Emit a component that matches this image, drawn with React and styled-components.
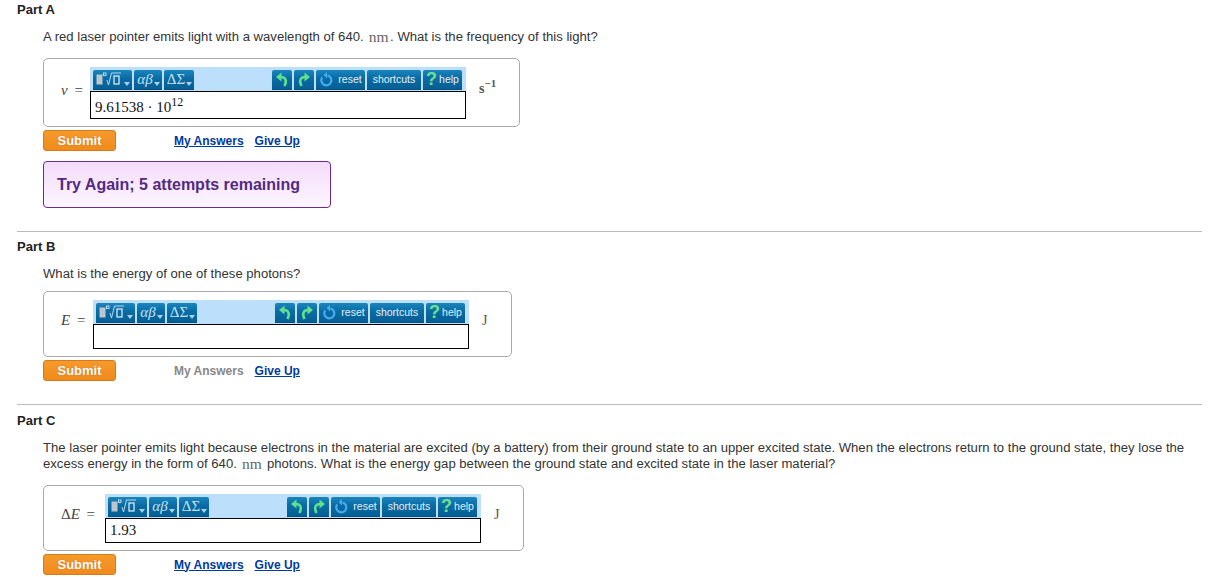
import React from 'react';
import styled, { createGlobalStyle } from 'styled-components';

const GlobalStyle = createGlobalStyle`
  html, body {
    margin: 0;
    padding: 0;
    background: #fff;
    overflow: hidden;
  }
  body {
    font-family: "Liberation Sans", Arial, sans-serif;
    font-size: 13px;
    color: #333;
  }
`;

const Page = styled.div`
  width: 1208px;
  height: 577px;
  padding: 0 6px 0 17px;
  box-sizing: border-box;
`;

const Part = styled.section`
  padding-top: ${(p) => p.$top}px;
  padding-bottom: ${(p) => p.$bottom}px;
  border-bottom: ${(p) => (p.$last ? 'none' : '1px solid #bbb')};
`;

const PartTitle = styled.h3`
  margin: 0;
  font-size: 13px;
  line-height: 18px;
  font-weight: bold;
  color: #222;
`;

const Body = styled.div`
  padding-left: 26px;
`;

const Question = styled.p`
  margin: ${(p) => p.$top}px 0 ${(p) => p.$bottom}px;
  width: 1150px;
  font-size: 13.12px;
  line-height: 16px;
  color: #333;
`;

const Mathy = styled.span`
  margin: 0 1.5px;
  font-family: "Liberation Serif", serif;
  font-size: 15.5px;
  line-height: 0;
  vertical-align: -1px;
  color: #666;
`;

const AnswerBox = styled.div`
  display: flex;
  align-items: center;
  box-sizing: border-box;
  width: ${(p) => p.$width}px;
  padding: 8px 0 7px 17px;
  border: 1px solid #aaa;
  border-radius: 5px;
`;

const Label = styled.div`
  width: ${(p) => p.$width}px;
  flex: none;
  padding-bottom: ${(p) => p.$lift}px;
  font-family: "Liberation Serif", serif;
  font-size: 15px;
  word-spacing: 3px;
  color: #444;
  white-space: nowrap;
  i { font-style: italic; }
`;

const Editor = styled.div`
  width: 376px;
  flex: none;
`;

const Toolbar = styled.div`
  display: flex;
  height: 24px;
  box-sizing: border-box;
  padding: 3px 4px 1px 3px;
  gap: 2px;
  background: #bcdffb;
`;

const Spacer = styled.div`
  flex: 1;
`;

const ToolButton = styled.div`
  display: flex;
  align-items: center;
  justify-content: center;
  position: relative;
  box-sizing: border-box;
  width: ${(p) => p.$width}px;
  height: 20px;
  padding-bottom: 1px;
  border-radius: 2px 2px 0 0;
  background: linear-gradient(#1a85bd, #0a6ba3 45%, #055f94);
  border-bottom: 1px solid #045283;
  color: #e2f1fb;
  font-size: 10.5px;
  white-space: nowrap;
`;

const MenuText = styled.span`
  font-family: "Liberation Serif", serif;
  font-size: 15px;
  color: #c5e2f5;
  font-style: ${(p) => (p.$italic ? 'italic' : 'normal')};
  margin-right: 6px;
`;

const IconSlot = styled.span`
  display: flex;
  margin-right: ${(p) => p.$right || 0}px;
`;

const ButtonLabel = styled.span`
  margin-left: 4px;
`;

const Caret = styled.span`
  position: absolute;
  right: 2px;
  bottom: 3px;
  width: 0;
  height: 0;
  border-left: 3px solid transparent;
  border-right: 3px solid transparent;
  border-top: 4px solid #a9d3ef;
`;

const QuestionMark = styled.span`
  font-size: 18px;
  font-weight: bold;
  line-height: 18px;
  color: #6fe08c;
  margin-right: 2px;
`;

const Input = styled.div`
  height: ${(p) => p.$height}px;
  box-sizing: border-box;
  border: 1px solid #000;
  padding-left: 4px;
  font-family: "Liberation Serif", serif;
  font-size: 15px;
  line-height: ${(p) => (p.$height > 25 ? p.$height + 2 : p.$height - 2)}px;
  color: #111;
  sup {
    font-size: 12px;
    line-height: 0;
    vertical-align: 6px;
  }
`;

const Unit = styled.div`
  margin-left: 13px;
  padding-bottom: ${(p) => (p.$bold ? 9 : 7)}px;
  font-family: "Liberation Serif", serif;
  font-size: 14px;
  font-weight: ${(p) => (p.$bold ? 'bold' : 'normal')};
  color: #555;
  sup {
    font-size: 11px;
    line-height: 0;
    vertical-align: 6px;
  }
`;

const Actions = styled.div`
  display: flex;
  align-items: center;
  margin-top: 3px;
`;

const Submit = styled.button`
  width: 73px;
  height: 21px;
  padding: 0;
  box-sizing: border-box;
  border: 1px solid #d67a1a;
  border-radius: 3px;
  background: linear-gradient(#f59a2c, #f08a1c);
  color: #fff;
  font: bold 13px "Liberation Sans", sans-serif;
  text-shadow: 0 0 1px rgba(120, 60, 0, 0.5);
`;

const ActionLinks = styled.div`
  display: flex;
  gap: 11px;
  margin-left: 58px;
`;

const ActionLink = styled.a`
  font-size: 12px;
  font-weight: bold;
  color: ${(p) => (p.$disabled ? '#888' : '#003b9c')};
  text-decoration: ${(p) => (p.$disabled ? 'none' : 'underline')};
`;

const Feedback = styled.div`
  width: 288px;
  height: 47px;
  margin-top: 10px;
  padding-left: 13px;
  box-sizing: border-box;
  display: flex;
  align-items: center;
  border: 1px solid #6c2a8e;
  border-radius: 4px;
  background: linear-gradient(#f4dcfc, #fdf6ff);
  color: #542a82;
  font-size: 16px;
  font-weight: bold;
`;

const MatrixIcon = () => (
  <svg width="27" height="14" viewBox="0 0 27 14">
    <rect x="0.5" y="2.500" width="6" height="10" fill="#bcc6cc" />
    <rect x="7.500" y="1" width="2.500" height="2.500" fill="none" stroke="#e6f2fa" strokeWidth="0.8" />
    <path d="M11 8l1.500 5L15.500 1H25" fill="none" stroke="#c5e2f5" strokeWidth="0.9" />
    <rect x="18" y="4" width="5" height="8" fill="none" stroke="#e6f2fa" strokeWidth="1.200" />
  </svg>
);

const HistoryIcon = ({ flip }) => (
  <svg width="14" height="15" viewBox="0 0 14 15" style={flip ? { transform: 'scaleX(-1)' } : undefined}>
    <path d="M1 5l5.500-4.500v9z" fill="#5fe08f" />
    <path d="M6 5c4 0 6.500 3 3.500 9" fill="none" stroke="#5fe08f" strokeWidth="2.600" />
  </svg>
);

const ResetIcon = () => (
  <svg width="15" height="15" viewBox="0 0 15 15">
    <path d="M8.500 3.500A5 5 0 1 1 3.200 5.500" fill="none" stroke="#45abf0" strokeWidth="2.200" />
    <path d="M8 0v6.500L4.500 3z" fill="#45abf0" />
  </svg>
);

const MathToolbar = () => (
  <Toolbar>
    <ToolButton $width={39}>
      <IconSlot $right={6}>
        <MatrixIcon />
      </IconSlot>
      <Caret />
    </ToolButton>
    <ToolButton $width={28}>
      <MenuText $italic>αβ</MenuText>
      <Caret />
    </ToolButton>
    <ToolButton $width={30}>
      <MenuText>ΔΣ</MenuText>
      <Caret />
    </ToolButton>
    <Spacer />
    <ToolButton $width={20}>
      <HistoryIcon />
    </ToolButton>
    <ToolButton $width={20}>
      <HistoryIcon flip />
    </ToolButton>
    <ToolButton $width={49}>
      <ResetIcon />
      <ButtonLabel>reset</ButtonLabel>
    </ToolButton>
    <ToolButton $width={54}>shortcuts</ToolButton>
    <ToolButton $width={39}>
      <QuestionMark>?</QuestionMark>help
    </ToolButton>
  </Toolbar>
);

const Answer = ({ label, labelWidth, labelLift = 9, boxWidth, inputHeight, unit, boldUnit, children }) => (
  <AnswerBox $width={boxWidth}>
    <Label $width={labelWidth} $lift={labelLift}>{label}</Label>
    <Editor>
      <MathToolbar />
      <Input $height={inputHeight}>{children}</Input>
    </Editor>
    <Unit $bold={boldUnit}>{unit}</Unit>
  </AnswerBox>
);

const ActionRow = ({ answersDisabled }) => (
  <Actions>
    <Submit>Submit</Submit>
    <ActionLinks>
      <ActionLink $disabled={answersDisabled}>My Answers</ActionLink>
      <ActionLink>Give Up</ActionLink>
    </ActionLinks>
  </Actions>
);

export default function App() {
  return (
    <Page>
      <GlobalStyle />
      <Part $top={1} $bottom={23}>
        <PartTitle>Part A</PartTitle>
        <Body>
          <Question $top={10} $bottom={13}>
            A red laser pointer emits light with a wavelength of 640. <Mathy>nm</Mathy>. What is the frequency of this light?
          </Question>
          <Answer
            label={<><i>ν</i> =</>}
            labelWidth={29}
            labelLift={6}
            boxWidth={477}
            inputHeight={28}
            boldUnit
            unit={<>s<sup>−1</sup></>}
          >
            9.61538 · 10<sup>12</sup>
          </Answer>
          <ActionRow />
          <Feedback>Try Again; 5 attempts remaining</Feedback>
        </Body>
      </Part>
      <Part $top={6} $bottom={23}>
        <PartTitle>Part B</PartTitle>
        <Body>
          <Question $top={10} $bottom={9}>What is the energy of one of these photons?</Question>
          <Answer
            label={<><i>E</i> =</>}
            labelWidth={32}
            boxWidth={469}
            inputHeight={25}
            unit="J"
          />
          <ActionRow answersDisabled />
        </Body>
      </Part>
      <Part $top={7} $bottom={0} $last>
        <PartTitle>Part C</PartTitle>
        <Body>
          <Question $top={10} $bottom={13}>
            The laser pointer emits light because electrons in the material are excited (by a battery) from their ground state to an upper excited state. When the electrons return to the ground state, they lose the excess energy in the form of 640. <Mathy>nm</Mathy> photons. What is the energy gap between the ground state and excited state in the laser material?
          </Question>
          <Answer
            label={<>Δ<i>E</i> =</>}
            labelWidth={44}
            boxWidth={481}
            inputHeight={25}
            unit="J"
          >
            1.93
          </Answer>
          <ActionRow />
        </Body>
      </Part>
    </Page>
  );
}
